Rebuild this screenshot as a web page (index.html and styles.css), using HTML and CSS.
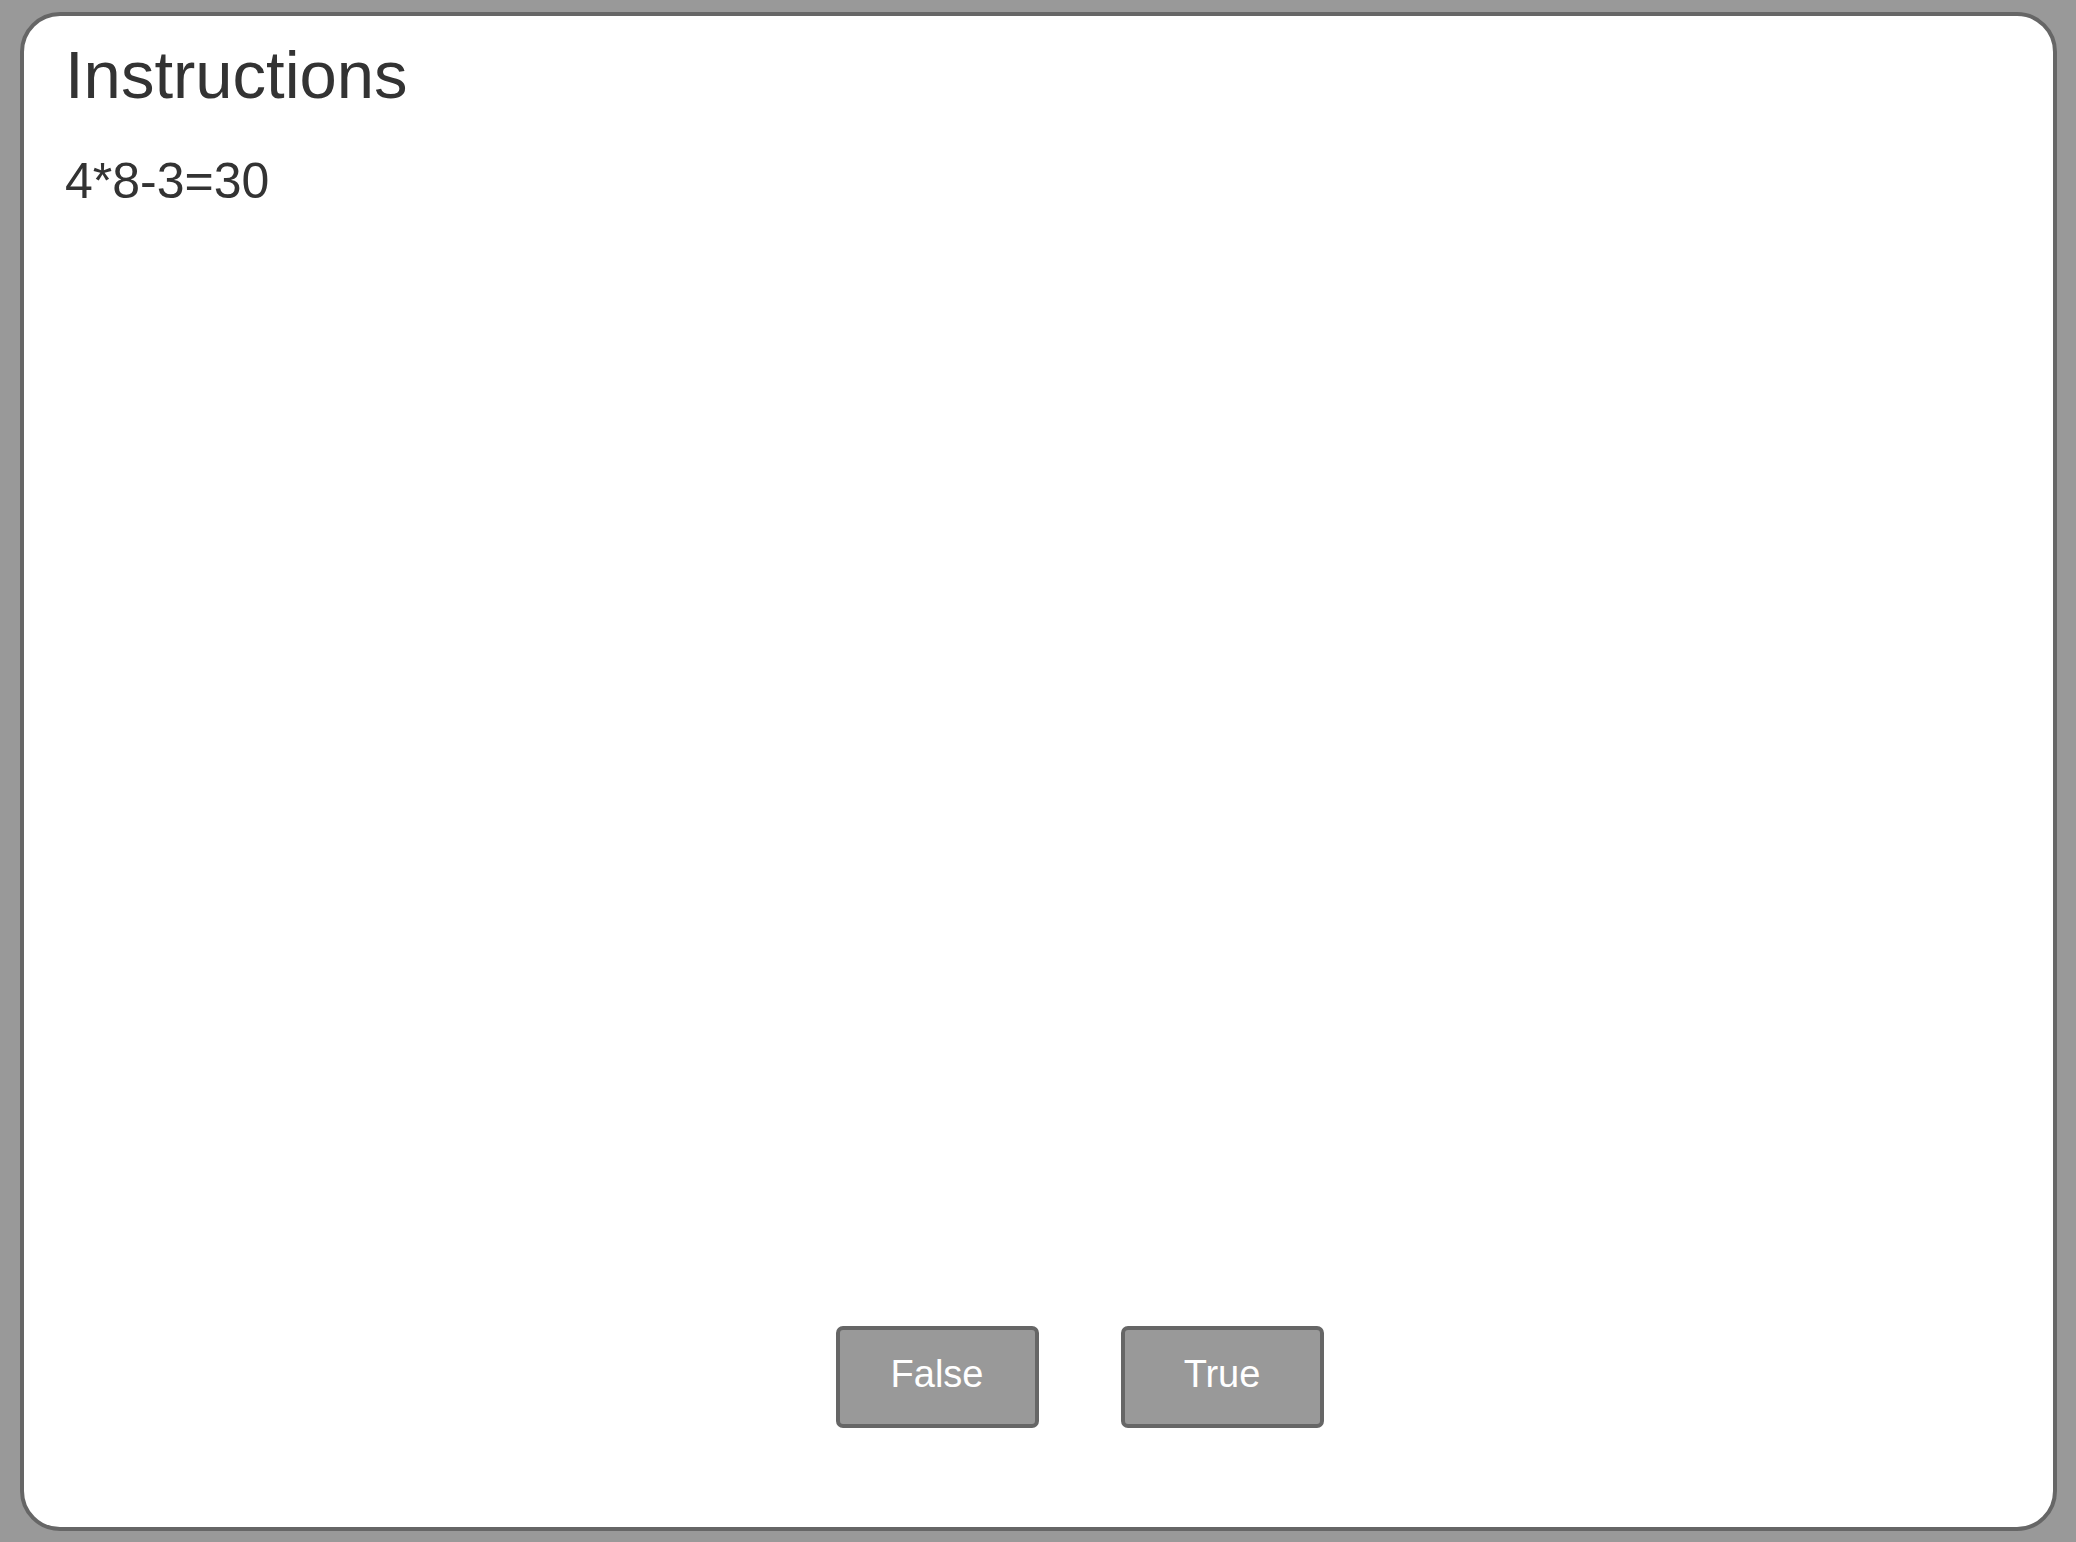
FILE: index.html
```html
<!DOCTYPE html>
<html lang="en">
<head>
<meta charset="utf-8">
<title>Instructions</title>
<link rel="stylesheet" href="styles.css">
</head>
<body>
<div class="card">
  <h1 class="title">Instructions</h1>
  <p class="equation">4*8-3=30</p>
  <div class="spacer"></div>
  <div class="actions">
    <button class="btn">False</button>
    <button class="btn">True</button>
  </div>
</div>
</body>
</html>
```

FILE: styles.css
```css
html, body {
  margin: 0;
  padding: 0;
  height: 100%;
}
body {
  background: #999999;
  font-family: "Liberation Sans", Arial, sans-serif;
  color: #333333;
  box-sizing: border-box;
  padding: 12px 19px 11px 20px;
}
.card {
  box-sizing: border-box;
  height: 100%;
  background: #ffffff;
  border: 4px solid #666666;
  border-radius: 40px;
  padding: 25px 41px 99px 41px;
  display: flex;
  flex-direction: column;
}
.title {
  margin: 0;
  font-size: 67px;
  font-weight: normal;
  line-height: 68px;
}
.equation {
  margin: 47px 0 0 0;
  font-size: 50px;
  line-height: 50px;
}
.spacer {
  flex: 1;
}
.actions {
  display: flex;
  justify-content: center;
}
.btn {
  box-sizing: border-box;
  width: 203px;
  height: 102px;
  margin-left: 82px;
  background: #999999;
  border: 4px solid #666666;
  border-radius: 7px;
  color: #ffffff;
  font-family: "Liberation Sans", Arial, sans-serif;
  font-size: 38px;
  padding: 0 0 6px 0;
  display: flex;
  align-items: center;
  justify-content: center;
}
```
